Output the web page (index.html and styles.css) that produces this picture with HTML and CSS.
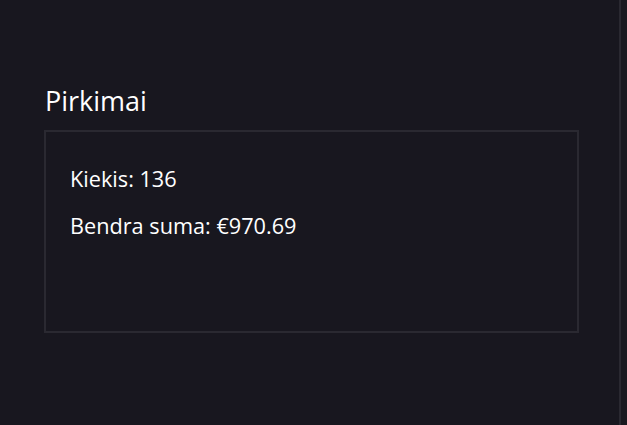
FILE: index.html
```html
<!DOCTYPE html>
<html lang="lt">
<head>
<meta charset="utf-8">
<link rel="stylesheet" href="styles.css">
</head>
<body>
<div class="layout">
  <main class="content">
    <h2 class="title">Pirkimai</h2>
    <section class="card">
      <p class="stat">Kiekis: 136</p>
      <p class="stat">Bendra suma: €970.69</p>
    </section>
  </main>
  <div class="scrollbar"></div>
</div>
</body>
</html>
```
FILE: styles.css
```css
html, body {
  margin: 0;
  height: 100%;
  background: #18171f;
  color: #ffffff;
  font-family: "Open Sans", "Noto Sans", sans-serif;
}
.layout {
  display: flex;
  height: 100%;
}
.content {
  flex: 1;
  padding: 84px 40px 0 44px;
}
.title {
  margin: 0 0 12px 1px;
  font-size: 27px;
  font-weight: 400;
  line-height: 34px;
}
.card {
  box-sizing: border-box;
  width: 535px;
  height: 203px;
  border: 2px solid #2a2931;
  padding: 32px 24px;
}
.stat {
  margin: 0 0 17px 0;
  font-size: 21.7px;
  line-height: 30px;
}
.scrollbar {
  width: 7px;
  border-left: 2px solid #2a2931;
  background: #1a1920;
}
```
